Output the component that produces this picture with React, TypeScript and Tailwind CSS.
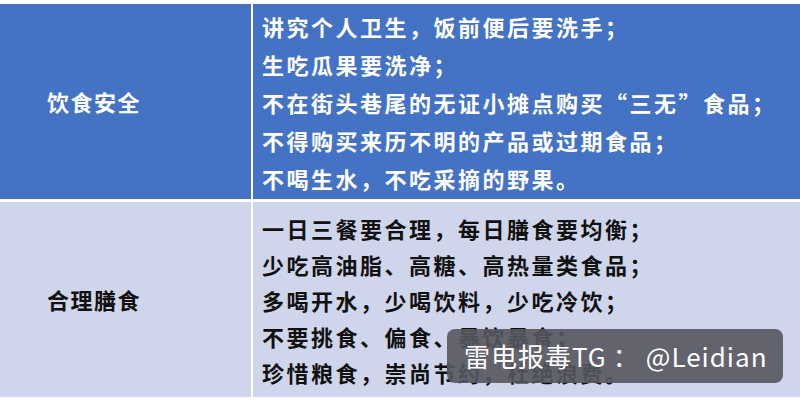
import React from 'react'

const font = { fontFamily: '"Noto Sans CJK SC", "Noto Sans", sans-serif' }

const rows = [
  {
    title: '饮食安全',
    dark: true,
    lines: [
      '讲究个人卫生，饭前便后要洗手；',
      '生吃瓜果要洗净；',
      '不在街头巷尾的无证小摊点购买“三无”食品；',
      '不得购买来历不明的产品或过期食品；',
      '不喝生水，不吃采摘的野果。',
    ],
  },
  {
    title: '合理膳食',
    dark: false,
    lines: [
      '一日三餐要合理，每日膳食要均衡；',
      '少吃高油脂、高糖、高热量类食品；',
      '多喝开水，少喝饮料，少吃冷饮；',
      '不要挑食、偏食、暴饮暴食；',
      '珍惜粮食，崇尚节约，杜绝浪费。',
    ],
  },
]

export default function App() {
  return (
    <div className="relative w-[800px] h-[400px] bg-white overflow-hidden" style={font}>
      <div className="flex flex-col gap-[3px] pt-[4px]">
        {rows.map((row) => (
          <div key={row.title} className="flex gap-[2px] h-[195px]">
            <div
              className={`w-[251px] flex items-center pl-[47px] text-[22px] font-bold tracking-[1.5px] ${
                row.dark ? 'bg-[#4472c4] text-white' : 'bg-[#cfd5ea] text-[#111]'
              }`}
            >
              {row.title}
            </div>
            <div
              className={`flex-1 flex flex-col justify-center pl-[9px] text-[22px] font-bold tracking-[2.5px] ${
                row.dark ? 'bg-[#4472c4] text-white leading-[38px]' : 'bg-[#cfd5ea] text-[#111] leading-[36px]'
              }`}
            >
              {row.lines.map((l) => (
                <div key={l}>{l}</div>
              ))}
            </div>
          </div>
        ))}
      </div>
      <div className="absolute left-[447px] top-[329px] w-[336px] h-[54px] rounded-[8px] bg-[#55575f]/90 flex items-center pl-[17px] text-white text-[26px] tracking-[1px] leading-none">
        雷电报毒TG<span className="mx-[6px]">：</span>@Leidian
      </div>
    </div>
  )
}
